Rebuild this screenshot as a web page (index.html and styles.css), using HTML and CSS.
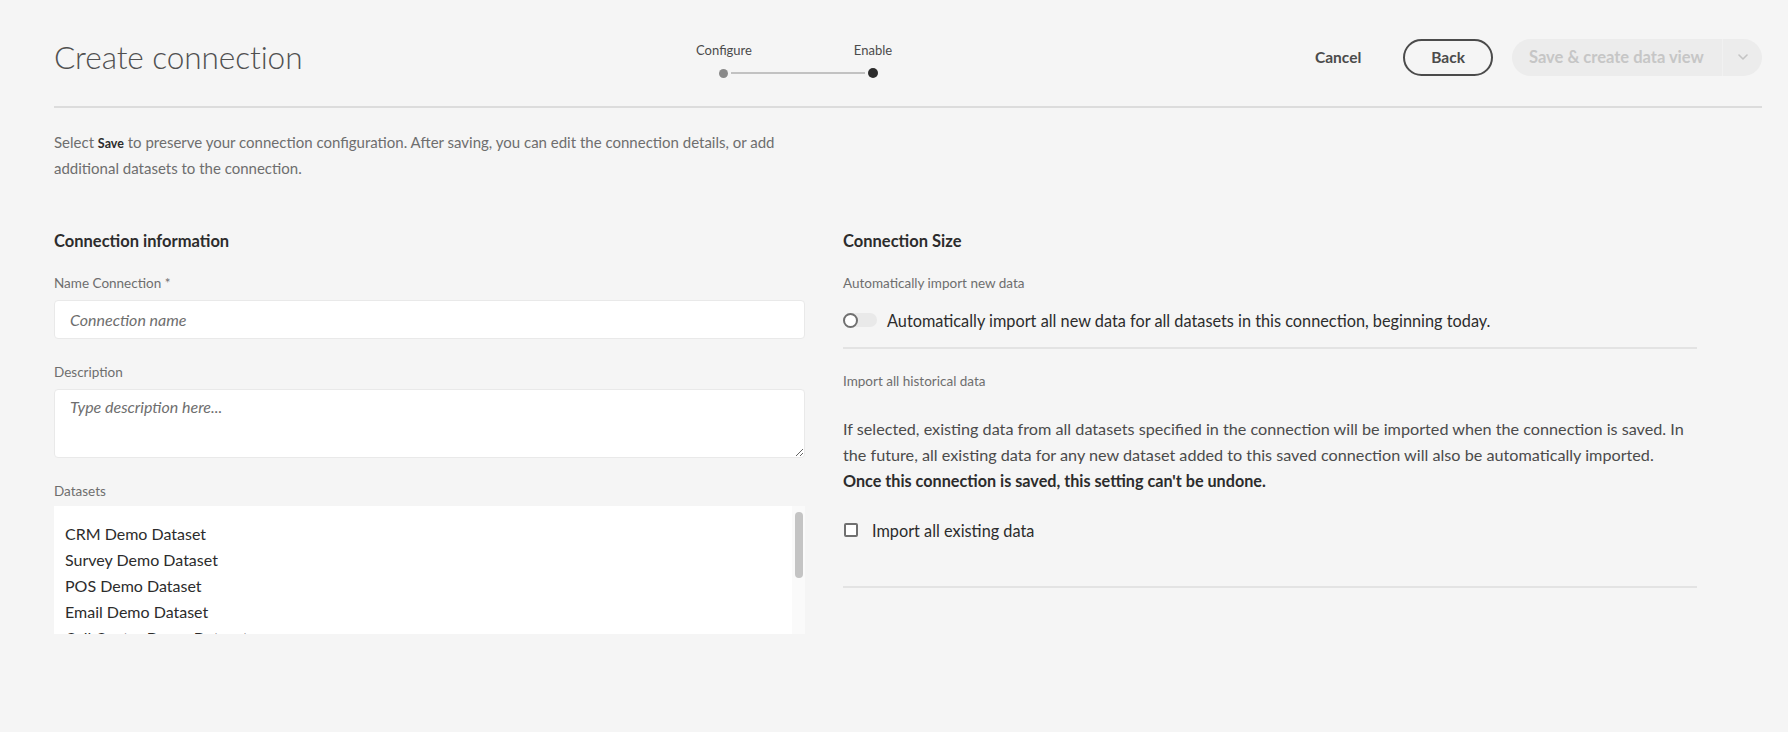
FILE: index.html
```html
<!DOCTYPE html>
<html lang="en">
<head>
<meta charset="utf-8">
<title>Create connection</title>
<link rel="stylesheet" href="styles.css">
</head>
<body>
<div class="page">
  <header class="header">
    <h1 class="title">Create connection</h1>
    <div class="stepper">
      <div class="step-labels"><span>Configure</span><span></span><span>Enable</span></div>
      <div class="step-track"><span class="dot done"></span><span class="line"></span><span class="dot current"></span></div>
    </div>
    <div class="actions">
      <button class="btn-quiet">Cancel</button>
      <button class="btn-outline">Back</button>
      <div class="btn-split">
        <span class="split-main">Save &amp; create data view</span>
        <span class="split-chevron"><svg width="10" height="6" viewBox="0 0 10 6"><path d="M1 1l4 4 4-4" fill="none" stroke="#c4c4c4" stroke-width="1.6" stroke-linecap="round" stroke-linejoin="round"/></svg></span>
      </div>
    </div>
  </header>

  <p class="intro">Select <b>Save</b> to preserve your connection configuration. After saving, you can edit the connection details, or add additional datasets to the connection.</p>

  <div class="columns">
    <section class="col-left">
      <h2 class="section-title">Connection information</h2>
      <label class="field-label">Name Connection <span class="req">*</span></label>
      <input class="text-input" type="text" placeholder="Connection name">
      <label class="field-label">Description</label>
      <textarea class="text-area" placeholder="Type description here..."></textarea>
      <label class="field-label">Datasets</label>
      <div class="list-box">
        <ul class="list-items">
          <li>CRM Demo Dataset</li>
          <li>Survey Demo Dataset</li>
          <li>POS Demo Dataset</li>
          <li>Email Demo Dataset</li>
          <li>Call Center Demo Dataset</li>
          <li>Web Demo Dataset</li>
        </ul>
        <div class="scroll-track"><div class="scroll-thumb"></div></div>
      </div>
    </section>

    <section class="col-right">
      <h2 class="section-title">Connection Size</h2>
      <label class="field-label">Automatically import new data</label>
      <div class="toggle-row">
        <span class="toggle"><span class="knob"></span></span>
        <span class="toggle-text">Automatically import all new data for all datasets in this connection, beginning today.</span>
      </div>
      <div class="divider first"></div>
      <label class="field-label">Import all historical data</label>
      <p class="info">If selected, existing data from all datasets specified in the connection will be imported when the connection is saved. In the future, all existing data for any new dataset added to this saved connection will also be automatically imported. <b>Once this connection is saved, this setting can't be undone.</b></p>
      <div class="check-row">
        <span class="checkbox"></span>
        <span class="check-text">Import all existing data</span>
      </div>
      <div class="divider last"></div>
    </section>
  </div>
</div>
</body>
</html>
```

FILE: styles.css
```css
* { box-sizing: border-box; }

html, body {
  margin: 0;
  padding: 0;
}

body {
  width: 1788px;
  height: 732px;
  overflow: hidden;
  background: #f5f5f5;
  font-family: Lato, "Liberation Sans", sans-serif;
  color: #2c2c2c;
}

.page {
  padding: 0 26px 0 54px;
}

/* Header */
.header {
  display: flex;
  align-items: center;
  height: 108px;
  padding-top: 8px;
  border-bottom: 2px solid #dcdcdc;
}

.title {
  margin: 0;
  width: 640px;
  font-size: 31.6px;
  font-weight: 300;
  color: #505050;
  letter-spacing: -0.1px;
}

.stepper {
  align-self: flex-start;
  margin-top: 34px;
  width: 209px;
}

.step-labels {
  display: grid;
  grid-template-columns: 60px 1fr 60px;
  font-size: 13px;
  line-height: 16px;
  color: #4b4b4b;
  text-align: center;
}

.step-track {
  display: flex;
  align-items: center;
  padding: 0 25px;
  margin-top: 10px;
}

.dot {
  width: 10px;
  height: 10px;
  border-radius: 50%;
  flex: 0 0 auto;
}
.dot.done { background: #8a8a8a; width: 9px; height: 9px; }
.dot.current { background: #2c2c2c; }

.line {
  flex: 1;
  height: 2px;
  margin: 0 3px;
  background: #c2c2c2;
}

.actions {
  margin-left: auto;
  display: flex;
  align-items: center;
}

button {
  font-family: inherit;
  cursor: pointer;
}

.btn-quiet {
  border: none;
  background: none;
  font-size: 15.5px;
  font-weight: 700;
  color: #4b4b4b;
  padding: 0;
  margin-right: 42px;
}

.btn-outline {
  height: 37px;
  padding: 0 26px;
  border: 2px solid #4b4b4b;
  border-radius: 19px;
  background: transparent;
  font-size: 15.5px;
  font-weight: 700;
  color: #4b4b4b;
  margin-right: 19px;
}

.btn-split {
  display: flex;
  height: 37px;
  border-radius: 19px;
  background: #ececec;
  overflow: hidden;
}

.split-main {
  display: flex;
  align-items: center;
  width: 210px;
  padding-left: 17px;
  font-size: 16.5px;
  font-weight: 700;
  color: #c6c6c6;
  white-space: nowrap;
}

.split-chevron {
  display: flex;
  align-items: center;
  justify-content: center;
  width: 40px;
  border-left: 1px solid #f1f1f1;
}

/* Intro */
.intro {
  margin: 22px 0 0;
  max-width: 760px;
  font-size: 15px;
  line-height: 25px;
  color: #6e6e6e;
}

.intro b {
  font-size: 12.5px;
  font-weight: 700;
  color: #2c2c2c;
}

/* Columns */
.columns {
  display: flex;
  gap: 38px;
  margin-top: 50px;
}

.col-left { width: 751px; }
.col-right { width: 854px; }

.section-title {
  margin: 0;
  font-size: 16.5px;
  line-height: 20px;
  font-weight: 700;
  color: #2c2c2c;
}

.field-label {
  display: block;
  margin-top: 23px;
  margin-bottom: 8px;
  font-size: 13.5px;
  line-height: 18px;
  color: #6e6e6e;
}

.text-input + .field-label,
.text-area + .field-label { margin-top: 24px; }

.text-area + .field-label { margin-bottom: 6px; }

.req { color: #6e6e6e; }

.text-input,
.text-area {
  display: block;
  width: 100%;
  background: #fff;
  border: 1px solid #e9e9e9;
  border-radius: 4px;
  font-family: inherit;
  font-size: 16px;
  font-style: italic;
  color: #2c2c2c;
  outline: none;
}

.text-input {
  height: 39px;
  padding: 0 15px;
}

.text-area {
  height: 69px;
  padding: 7px 15px;
  line-height: 20px;
  resize: vertical;
}

.text-input::placeholder,
.text-area::placeholder {
  color: #6e6e6e;
  font-style: italic;
}

.list-box {
  display: flex;
  height: 128px;
  background: #fff;
}

.list-items {
  flex: 1;
  margin: 0;
  padding: 15px 11px 0;
  list-style: none;
  overflow: hidden;
  font-size: 16px;
  line-height: 26px;
  color: #2c2c2c;
}

.scroll-track {
  width: 13px;
  background: #fafafa;
  padding-top: 6px;
}

.scroll-thumb {
  width: 8px;
  height: 66px;
  margin: 0 auto;
  border-radius: 4px;
  background: #c4c4c4;
}

/* Right column */
.toggle-row {
  display: flex;
  align-items: center;
  height: 28px;
  margin-top: 14px;
}

.toggle {
  display: flex;
  align-items: center;
  width: 34px;
  height: 14px;
  border-radius: 7px;
  background: #e9e9e9;
  flex: 0 0 auto;
}

.knob {
  width: 15px;
  height: 15px;
  border-radius: 50%;
  border: 2px solid #707070;
  background: #fff;
}

.toggle-text {
  margin-left: 10px;
  font-size: 16.3px;
  color: #2c2c2c;
}

.divider {
  height: 2px;
  background: #e3e3e3;
}
.divider.first { margin-top: 13px; }
.divider.last { margin-top: 46px; }

.divider + .field-label { margin-top: 23px; }

.info {
  margin: 26px 0 0;
  max-width: 848px;
  font-size: 16.2px;
  line-height: 26px;
  color: #4b4b4b;
}

.info b { color: #2c2c2c; }

.check-row {
  display: flex;
  align-items: center;
  height: 20px;
  margin-top: 26px;
}

.checkbox {
  width: 14px;
  height: 14px;
  border: 2px solid #707070;
  border-radius: 2px;
  background: #fff;
  margin-left: 1px;
}

.check-text {
  margin-left: 14px;
  font-size: 16.3px;
  color: #2c2c2c;
}
```
